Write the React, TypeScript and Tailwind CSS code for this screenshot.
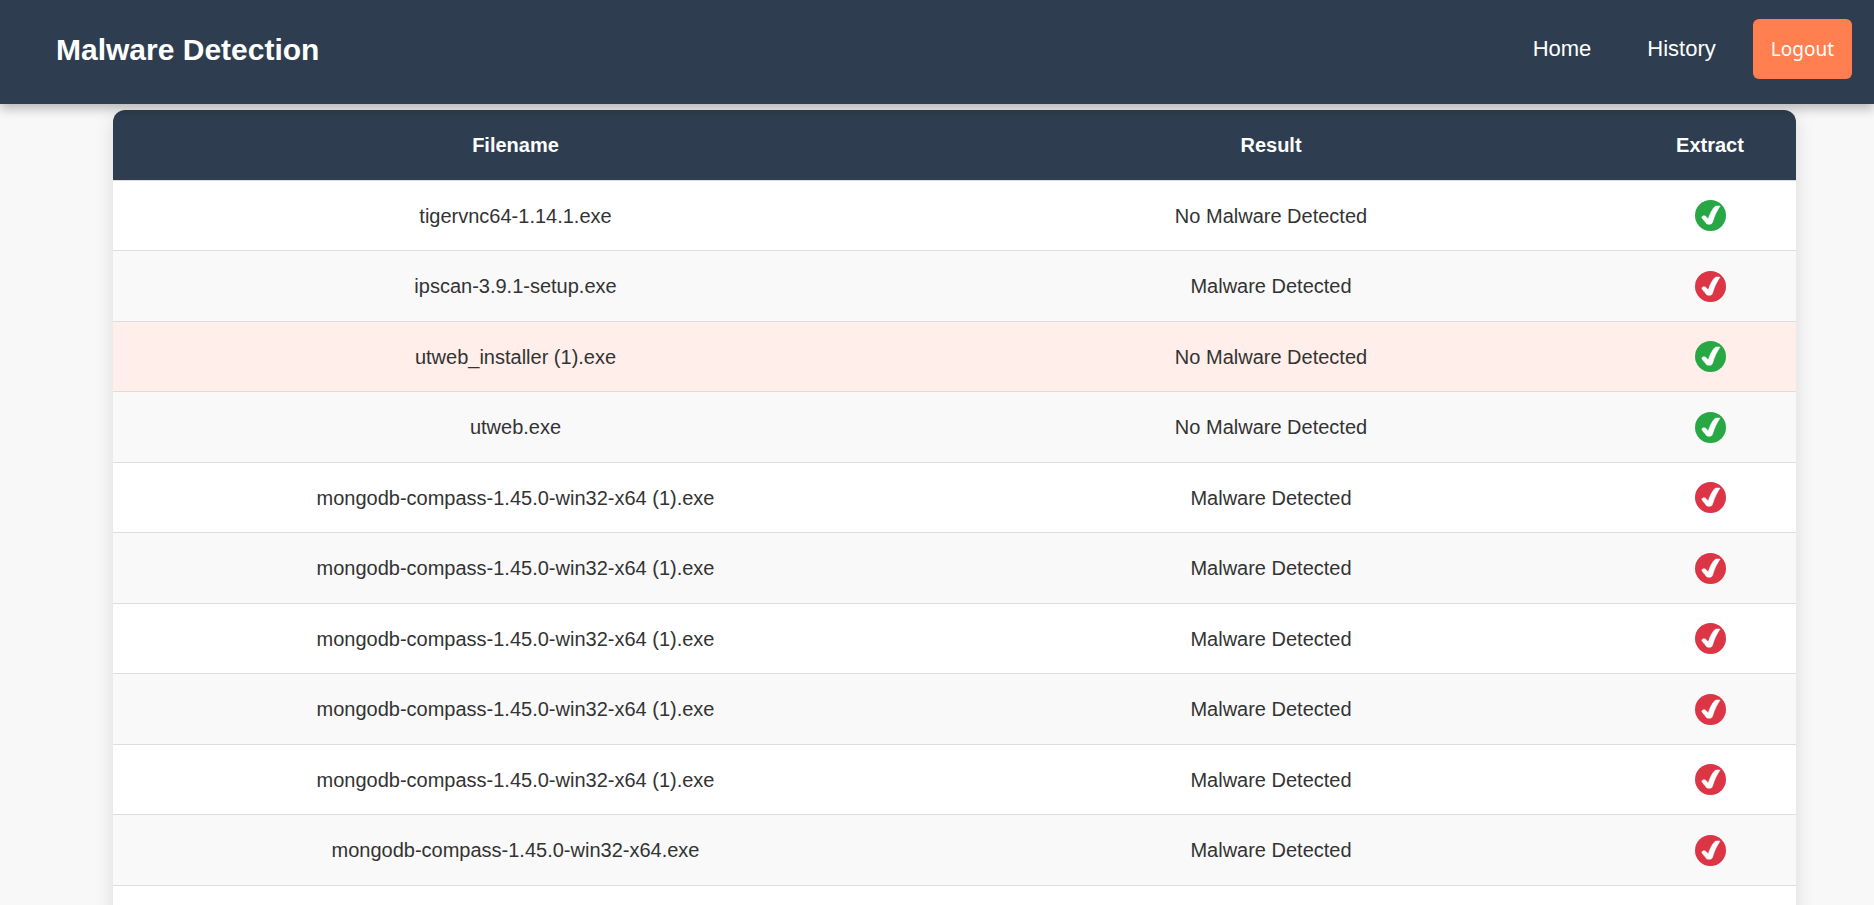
const rows = [
  { file: 'tigervnc64-1.14.1.exe', malware: false },
  { file: 'ipscan-3.9.1-setup.exe', malware: true },
  { file: 'utweb_installer (1).exe', malware: false, active: true },
  { file: 'utweb.exe', malware: false },
  { file: 'mongodb-compass-1.45.0-win32-x64 (1).exe', malware: true },
  { file: 'mongodb-compass-1.45.0-win32-x64 (1).exe', malware: true },
  { file: 'mongodb-compass-1.45.0-win32-x64 (1).exe', malware: true },
  { file: 'mongodb-compass-1.45.0-win32-x64 (1).exe', malware: true },
  { file: 'mongodb-compass-1.45.0-win32-x64 (1).exe', malware: true },
  { file: 'mongodb-compass-1.45.0-win32-x64.exe', malware: true },
];

function ExtractButton({ malware, file }: { malware: boolean; file: string }) {
  return (
    <button
      type="button"
      aria-label={`Extract ${file}`}
      className={`mx-auto block size-[31px] rounded-full ${malware ? 'bg-[#dc3545]' : 'bg-[#28a745]'}`}
    >
      <svg viewBox="0 0 31 31" className="size-full" aria-hidden="true">
        <path
          fill="#fff"
          stroke="#fff"
          strokeWidth="0.5"
          strokeLinejoin="round"
          d="M6.8 17.6 C6.8 16.3 8 15.7 9.4 15.8 C10.9 15.9 11.6 17.4 13.2 19 C14.8 14 17.2 9 20 6.5 C21 5.8 23.4 5.9 25.1 6.1 C21.8 11 19.6 15.6 17.7 21.8 C17.1 23.8 16.2 24.3 14.2 24.3 C12.2 24.3 11.6 23.9 10.6 22.4 C9.5 20.7 7.6 19.3 6.8 17.6 Z"
        />
      </svg>
    </button>
  );
}

export default function App() {
  return (
    <div className="h-screen overflow-hidden bg-[#f8f8f8] font-['Liberation_Sans',Arial,sans-serif] text-[#333]">
      <header className="relative z-10 flex h-[104px] items-center justify-between bg-[#2e3e50] pb-[6px] pl-14 pr-[22px] text-white shadow-[0_5px_10px_rgba(0,0,0,0.25)]">
        <h1 className="pt-px text-[30px] font-bold leading-9">Malware Detection</h1>
        <nav className="flex items-center">
          <a href="#home" className="mr-14 text-[22px] leading-7">Home</a>
          <a href="#history" className="mr-[37px] text-[22px] leading-7">History</a>
          <button type="button" className="h-[60px] rounded-md bg-[#ff7f50] px-[18px] font-['Noto_Sans',sans-serif] text-[19px] leading-6">
            Logout
          </button>
        </nav>
      </header>

      <main className="pl-[113px] pr-[78px] pt-[6px]">
        <div className="overflow-hidden rounded-t-xl bg-white shadow-[0_5px_19px_rgba(0,0,0,0.12)]">
          <table className="w-full table-fixed border-separate border-spacing-0 text-center text-[20px] leading-6">
            <colgroup>
              <col />
              <col className="w-[706px]" />
              <col className="w-[172px]" />
            </colgroup>
            <thead>
              <tr className="h-[70px] bg-[#2e3e50] text-white">
                <th className="font-bold">Filename</th>
                <th className="font-bold">Result</th>
                <th className="font-bold">Extract</th>
              </tr>
            </thead>
            <tbody>
              {rows.map((row, i) => (
                <tr
                  key={i}
                  className={`h-[70px] even:h-[71px] *:border-t *:border-[#ddd] ${row.active ? 'bg-[#ffeee9]' : 'bg-white even:bg-[#f9f9f9]'}`}
                >
                  <td>{row.file}</td>
                  <td>{row.malware ? 'Malware Detected' : 'No Malware Detected'}</td>
                  <td>
                    <ExtractButton malware={row.malware} file={row.file} />
                  </td>
                </tr>
              ))}
              <tr className="h-[70px] bg-white">
                <td colSpan={3} className="border-t border-[#ddd]" />
              </tr>
            </tbody>
          </table>
        </div>
      </main>
    </div>
  );
}
